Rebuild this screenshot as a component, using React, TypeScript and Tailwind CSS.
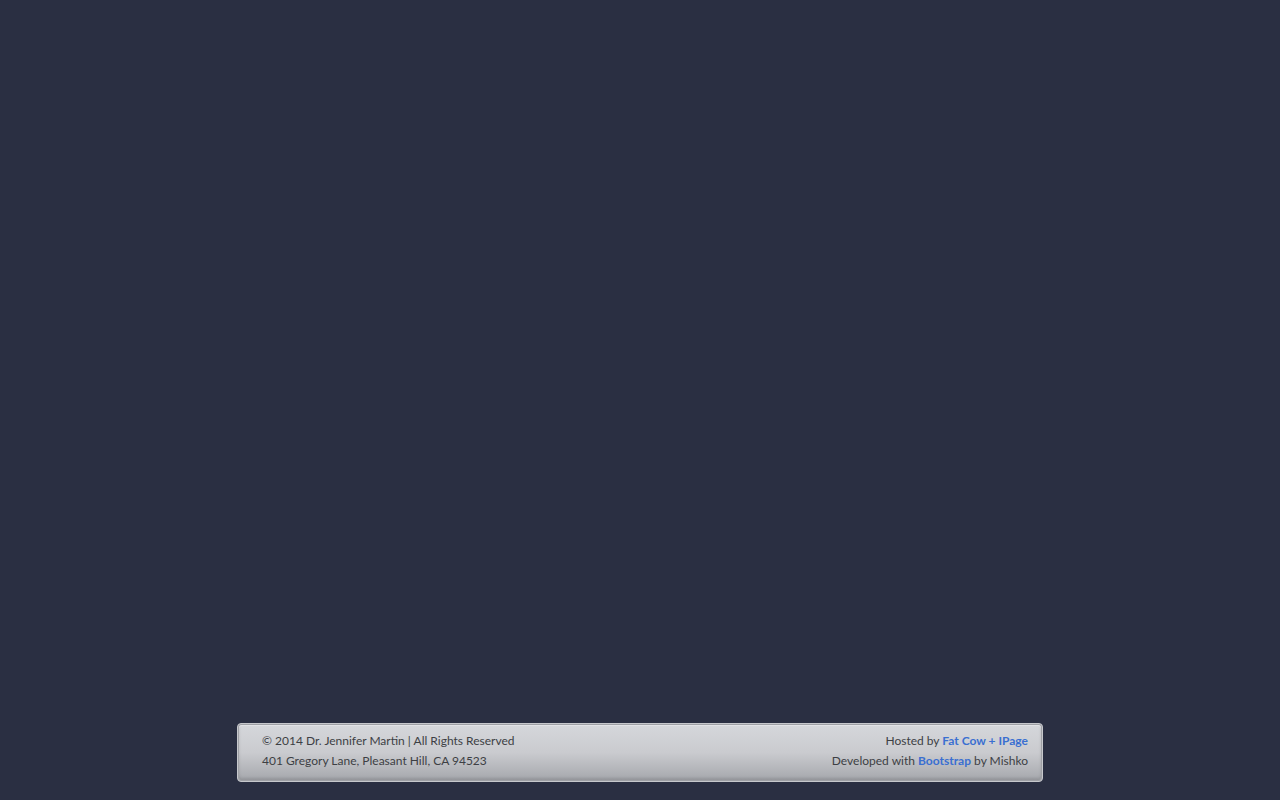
export default function App() {
  return (
    <div className="min-h-screen w-full bg-[#2a2f42] flex flex-col justify-end items-center pb-[18px]" style={{ fontFamily: 'Lato, "Open Sans", sans-serif' }}>
      <div className="w-[806px] h-[59px] rounded-[4px] border border-[#c6c8cc] bg-[#9ea0a5] p-[1px]">
        <div className="h-full w-full rounded-[3px] bg-gradient-to-b from-[#d5d7db] via-[#cacbcf] to-[#a6a8ad] shadow-[inset_0_1px_0_#e2e3e6,inset_0_-2px_3px_rgba(0,0,0,0.12)] flex justify-between items-center pl-[23px] pr-[13px] pb-[3px] text-[12px] leading-[20px] text-[#3d3f44]">
          <div>
            <div>© 2014 Dr. Jennifer Martin | All Rights Reserved</div>
            <div>401 Gregory Lane, Pleasant Hill, CA 94523</div>
          </div>
          <div className="text-right">
            <div>Hosted by <a className="text-[#3a6fd1] font-bold">Fat Cow + IPage</a></div>
            <div>Developed with <a className="text-[#3a6fd1] font-bold">Bootstrap</a> by Mishko</div>
          </div>
        </div>
      </div>
    </div>
  );
}
